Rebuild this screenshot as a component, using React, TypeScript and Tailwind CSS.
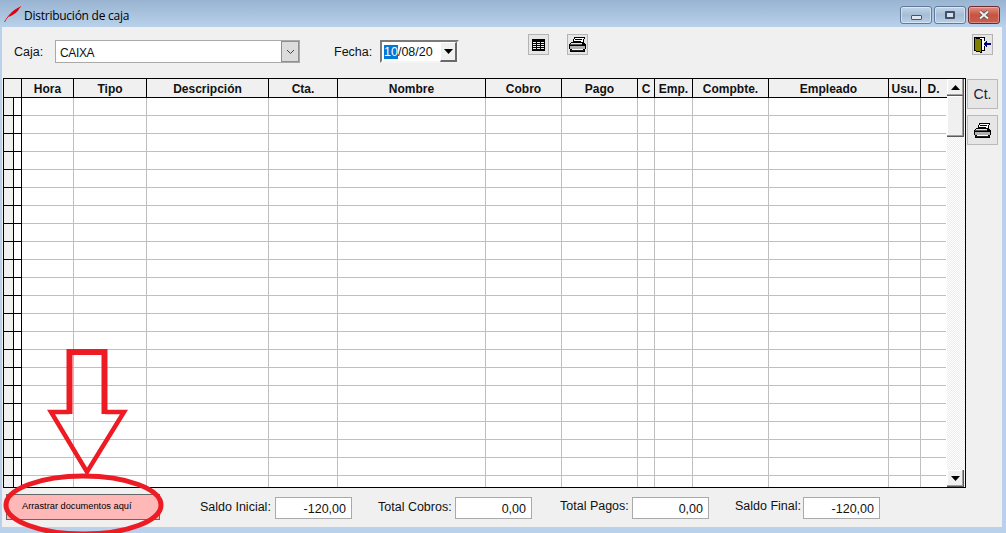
import React from "react";

const cols = [
  { t: "Hora", w: "w-[52px]" },
  { t: "Tipo", w: "w-[73px]" },
  { t: "Descripción", w: "w-[122px]" },
  { t: "Cta.", w: "w-[69px]" },
  { t: "Nombre", w: "w-[148px]" },
  { t: "Cobro", w: "w-[76px]" },
  { t: "Pago", w: "w-[76px]" },
  { t: "C", w: "w-[17px]" },
  { t: "Emp.", w: "w-[38px]" },
  { t: "Compbte.", w: "w-[76px]" },
  { t: "Empleado", w: "w-[120px]" },
  { t: "Usu.", w: "w-[32px]" },
  { t: "D.", w: "w-[25px]" },
];

function PrinterIcon() {
  return (
    <svg width="17" height="15" viewBox="0 0 17 15" shapeRendering="crispEdges">
      <path d="M5.5 0.5H15.5L13.5 6.5H3.5Z" fill="#fff" stroke="#000" />
      <path d="M6 2H13M5 4H12" stroke="#000" />
      <path d="M2.5 5.5H14.5L16.5 7.5V11.5H0.5V7.5Z" fill="#e4e4e4" stroke="#000" />
      <path d="M1 8.5H16" stroke="#000" />
      <path d="M1 7.5H14" stroke="#555" />
      <path d="M0 9H17V12H0Z" fill="#b0b0b0" />
      <path d="M0.5 9V12M16.5 9V12" stroke="#000" />
      <path d="M1.5 12.5H15.5V14.5H1.5Z" fill="#222" stroke="#000" />
      <path d="M3 12.5H14" stroke="#fff" />
      <path d="M13 6H16V8H13Z" fill="#000" />
    </svg>
  );
}

function TableIcon() {
  return (
    <svg width="13" height="12" viewBox="0 0 13 12" shapeRendering="crispEdges">
      <rect width="13" height="12" fill="#000" />
      <path d="M1 3H4V4H1ZM5 3H8V4H5ZM9 3H12V4H9ZM1 5H4V6H1ZM5 5H8V6H5ZM9 5H12V6H9ZM1 7H4V8H1ZM5 7H8V8H5ZM9 7H12V8H9ZM1 9H4V10H1ZM5 9H8V10H5ZM9 9H12V10H9Z" fill="#efefef" />
    </svg>
  );
}

function DoorIcon() {
  return (
    <svg width="17" height="16" viewBox="0 0 17 16" shapeRendering="crispEdges">
      <path d="M0.5 0.5H10.5V4M10.5 9V13.5H6" fill="none" stroke="#000" />
      <path d="M1 1H10V13H1Z" fill="#fff" />
      <path d="M0.5 0.5L7.5 2.5V15.5L0.5 13.5Z" fill="#808000" stroke="#000" />
      <path d="M13 6H17V8H13V10H12V9H11V8H10V6H11V5H12V4H13Z" fill="#000080" />
    </svg>
  );
}

function Tool({ children, className }: { children: React.ReactNode; className: string }) {
  return (
    <div className={`w-[21px] h-[21px] border border-[#b4b4b4] bg-[#e6e6e6] flex items-center justify-center ${className}`}>
      {children}
    </div>
  );
}

function WinBtn({ className, children }: { className: string; children: React.ReactNode }) {
  return (
    <div className={`h-[18px] w-[32px] rounded-[3px] border flex items-center justify-center ${className}`}>{children}</div>
  );
}

function Row() {
  return (
    <div className="flex h-[18px] shrink-0">
      <div className="w-[9px] h-[18px] bg-[#f0f0f0] border-b border-black" />
      <div className="w-[9px] h-[18px] bg-white border-l border-r border-b border-black" />
      {cols.map((c, i) => (
        <div
          key={c.t}
          className={`${c.w} h-[18px] bg-white border-b border-[#bfbfbf] ${i === cols.length - 1 ? "" : "border-r"}`}
        />
      ))}
    </div>
  );
}

function Total({ label, value, labelW, up }: { label: string; value: string; labelW: string; up?: boolean }) {
  return (
    <div className="flex items-center">
      <span className={`${labelW} text-[12.5px] text-[#111] whitespace-nowrap ${up ? "-translate-y-px" : ""}`}>{label}</span>
      <div className="w-[77px] h-[22px] border border-[#a9a9a9] bg-white text-right pr-[5px] text-[12.5px] leading-[22px] text-[#111]">{value}</div>
    </div>
  );
}

const btnShade = "bg-[#f0f0f0] border-r border-b border-[#5a5a5a] shadow-[inset_-1px_-1px_0_#a0a0a0,inset_1px_1px_0_#ffffff]";

export default function App() {
  return (
    <div className="relative w-[1006px] h-[533px] overflow-hidden bg-[#b9d1ea] flex flex-col font-['Liberation_Sans',sans-serif]">
      {/* Title bar */}
      <div className="h-[27px] shrink-0 flex items-center bg-gradient-to-b from-[#99b4d1] to-[#b9d1ea] relative">
        <svg width="18" height="18" viewBox="0 0 18 18" className="ml-[4px] mt-[1px]">
          <path d="M0.5 17C4 11 7 8 10 6C13 4 15 3 17 1.5" fill="none" stroke="#ed1c24" strokeWidth="1" />
          <path d="M5.5 11C8 7 11 5 15 3C13 7 10 9 5.5 11Z" fill="#e00010" stroke="#e00010" strokeWidth="1.2" />
        </svg>
        <span className="ml-[2px] mt-[4px] text-[12px] font-['Open_Sans',sans-serif] text-black tracking-[-0.25px]">Distribución de caja</span>
        <div className="absolute left-[900px] top-[6px] flex gap-[2px]">
          <WinBtn className="border-[#5f7a9a] bg-gradient-to-b from-[#c4d5e8] via-[#a5bdd6] to-[#b9d0e6] shadow-[inset_0_0_0_1px_rgba(255,255,255,0.45)]">
            <div className="w-[11px] h-[5px] mt-[5px] bg-[#dfe7f0] border border-[#44566b] rounded-[1px]" />
          </WinBtn>
          <WinBtn className="border-[#5f7a9a] bg-gradient-to-b from-[#c4d5e8] via-[#a5bdd6] to-[#b9d0e6] shadow-[inset_0_0_0_1px_rgba(255,255,255,0.45)]">
            <div className="w-[10px] h-[8px] border-2 border-[#3f5068] bg-[#d5e0ec] rounded-[1px]" />
          </WinBtn>
          <WinBtn className="border-[#6e2a30] bg-gradient-to-b from-[#dc8f84] via-[#c9523f] to-[#c8604f] shadow-[inset_0_0_0_1px_rgba(255,255,255,0.3)]">
            <svg width="14" height="10" viewBox="0 0 14 10">
              <path d="M3 1.5L11 8.5M11 1.5L3 8.5" stroke="#4a4a4a" strokeWidth="3.6" />
              <path d="M3 1.5L11 8.5M11 1.5L3 8.5" stroke="#eeeeee" strokeWidth="2.2" />
            </svg>
          </WinBtn>
        </div>
      </div>

      {/* Window body */}
      <div className="mx-[2px] w-[1000px] h-[500px] shrink-0 bg-[#f0f0f0] flex flex-col">
        {/* Toolbar */}
        <div className="h-[51px] shrink-0">
          <div className="flex items-start pt-[13px] pl-[12px]">
            <span className="w-[41px] h-[23px] text-[12.5px] leading-[25px] text-[#111]">Caja:</span>
            <div className="w-[245px] h-[23px] border border-[#a9a9a9] bg-white flex items-center justify-between">
              <span className="pl-[4px] pt-[2px] text-[12px] tracking-[-0.35px] text-[#111]">CAIXA</span>
              <div className="w-[18px] h-[21px] border border-[#8f8f8f] bg-[#dcdcdc] flex items-center justify-center">
                <svg width="9" height="6" viewBox="0 0 9 6"><path d="M1 1L4.5 4.5L8 1" fill="none" stroke="#444" /></svg>
              </div>
            </div>
            <span className="ml-[34px] w-[46px] h-[23px] text-[12.5px] leading-[25px] text-[#111]">Fecha:</span>
            <div className="w-[79px] h-[23px] border-2 border-t-[#7a7a7a] border-l-[#7a7a7a] border-r-[#f4f4f4] border-b-[#f4f4f4] bg-white flex items-center justify-between">
              <span className="pl-[2px] pt-[2px] text-[12.5px] leading-[17px] text-[#111]">
                <span className="bg-[#0078d7] text-white">10</span>/08/20
              </span>
              <div className="w-[17px] h-[20px] bg-[#f0f0f0] border-r-2 border-b-2 border-[#696969] border-l border-t border-l-white border-t-white flex items-center justify-center">
                <svg width="9" height="5" viewBox="0 0 9 5"><path d="M0 0H9L4.5 5Z" fill="#000" /></svg>
              </div>
            </div>
            <Tool className="ml-[69px] -mt-[6px]"><TableIcon /></Tool>
            <Tool className="ml-[18px] -mt-[6px]"><PrinterIcon /></Tool>
            <Tool className="ml-[384px] -mt-[6px]"><DoorIcon /></Tool>
          </div>
        </div>

        {/* Grid + side buttons */}
        <div className="h-[410px] shrink-0 flex">
          <div className="ml-px w-[963px] h-[410px] border border-black flex overflow-hidden bg-white">
            <div className="w-[943px] shrink-0 flex flex-col overflow-hidden">
              <div className="flex h-[19px] shrink-0 border-b border-black bg-[#f0f0f0]">
                <div className="w-[18px] h-[18px] border-r border-black" />
                {cols.map((c, i) => (
                  <div
                    key={c.t}
                    className={`${c.w} h-[18px] text-center text-[12px] leading-[21px] font-bold text-[#111] overflow-hidden ${i === cols.length - 1 ? "" : "border-r border-black"}`}
                  >
                    {c.t}
                  </div>
                ))}
              </div>
              {Array.from({ length: 22 }).map((_, i) => (
                <Row key={i} />
              ))}
            </div>
            {/* Scrollbar */}
            <div className="w-[18px] shrink-0 h-full flex flex-col bg-[repeating-conic-gradient(#ececec_0_25%,#ffffff_0_50%)] bg-[length:2px_2px]">
              <div className={`w-[17px] h-[17px] shrink-0 flex items-center justify-center ${btnShade}`}>
                <svg width="9" height="5" viewBox="0 0 9 5"><path d="M0 5H9L4.5 0Z" fill="#000" /></svg>
              </div>
              <div className={`w-[17px] h-[41px] shrink-0 ${btnShade}`} />
              <div className="flex-1" />
              <div className={`w-[17px] h-[17px] shrink-0 flex items-center justify-center ${btnShade}`}>
                <svg width="9" height="5" viewBox="0 0 9 5"><path d="M0 0H9L4.5 5Z" fill="#000" /></svg>
              </div>
            </div>
          </div>
          <div className="ml-[1px] pt-px flex flex-col gap-[6px]">
            <div className="w-[31px] h-[30px] border border-[#b9b9b9] bg-[#e6e6e6] text-center text-[14px] leading-[29px] text-[#1a2040]">Ct.</div>
            <div className="w-[31px] h-[30px] border border-[#b9b9b9] bg-[#e6e6e6] flex items-center justify-center"><PrinterIcon /></div>
          </div>
        </div>

        {/* Bottom bar */}
        <div className="flex-1 flex items-center pl-[4px]">
          <div className="w-[154px] h-[26px] border border-[#666] bg-[#ffb8b8] text-[9.25px] leading-[22px] pl-[15px] text-black -translate-y-px">Arrastrar documentos aquí</div>
          <div className="ml-[40px] flex items-center">
            <Total label="Saldo Inicial:" value="-120,00" labelW="w-[75px]" />
            <div className="ml-[26px]"><Total label="Total Cobros:" value="0,00" labelW="w-[77px]" /></div>
            <div className="ml-[28px]"><Total label="Total Pagos:" value="0,00" labelW="w-[72px]" up /></div>
            <div className="ml-[26px]"><Total label="Saldo Final:" value="-120,00" labelW="w-[68px]" up /></div>
          </div>
        </div>
      </div>

      {/* Red annotation drawn over the window */}
      <svg className="absolute left-0 top-0 pointer-events-none" width="1006" height="533" viewBox="0 0 1006 533">
        <path d="M69.5 414V352H104.5V414" fill="none" stroke="#ed1c24" strokeWidth="6" />
        <path d="M69 412H51L87 472L124 412H105" fill="none" stroke="#ed1c24" strokeWidth="4.5" />
        <ellipse cx="83.5" cy="505" rx="77.5" ry="29" fill="none" stroke="#ed1c24" strokeWidth="5" />
      </svg>
    </div>
  );
}
